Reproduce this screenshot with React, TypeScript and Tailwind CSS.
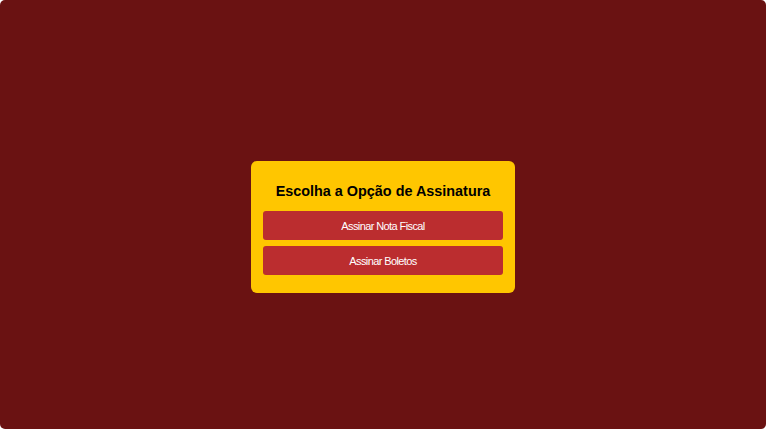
export default function App() {
  const options = ["Assinar Nota Fiscal", "Assinar Boletos"];

  return (
    <div className="h-[429px] w-[766px] overflow-hidden rounded-[5px] bg-[#6a1212] flex justify-center pt-[161px] font-['Liberation_Sans',Arial,sans-serif]">
      <div className="w-[264px] h-[132px] rounded-[6px] bg-[#ffc600] px-3 pt-[22px]">
        <h2 className="text-center text-[14.4px] leading-[16px] font-bold text-black mb-[12px]">
          Escolha a Opção de Assinatura
        </h2>
        <div className="flex flex-col gap-[6px]">
          {options.map((label) => (
            <button
              key={label}
              className="h-[29px] w-full rounded-[3px] bg-[#bb2d2f] pt-[2px] text-[11px] tracking-[-0.6px] text-white"
            >
              {label}
            </button>
          ))}
        </div>
      </div>
    </div>
  );
}
